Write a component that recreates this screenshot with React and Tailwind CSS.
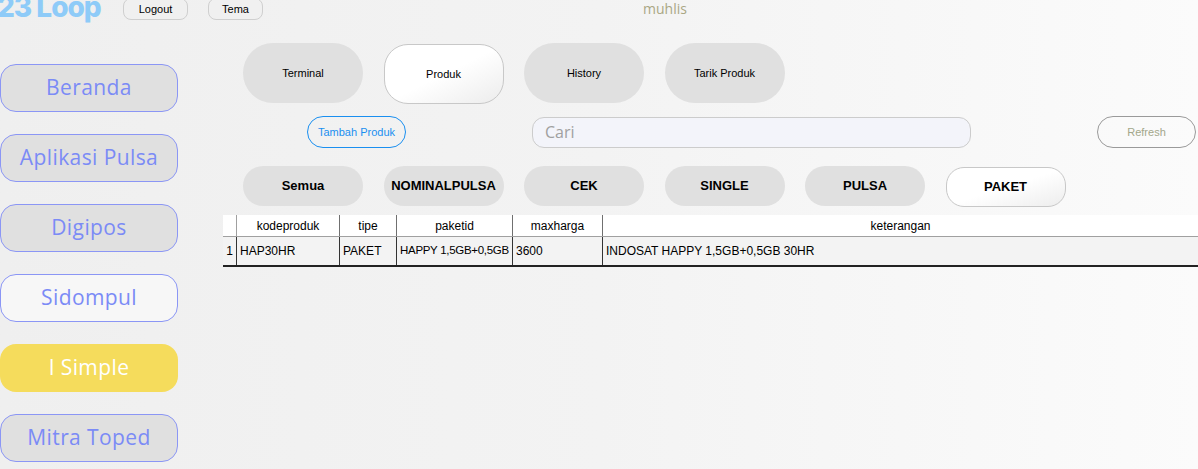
import React from "react";

const sideItems = [
  { label: "Beranda", style: "bg-[#e0e0e0] border border-[#8b96f5] text-[#7b8bf6]" },
  { label: "Aplikasi Pulsa", style: "bg-[#e0e0e0] border border-[#8b96f5] text-[#7b8bf6]" },
  { label: "Digipos", style: "bg-[#e0e0e0] border border-[#8b96f5] text-[#7b8bf6]" },
  { label: "Sidompul", style: "bg-[#f7f7f7] border border-[#8b96f5] text-[#7b8bf6]" },
  { label: "I Simple", style: "bg-[#f5dc5c] text-white" },
  { label: "Mitra Toped", style: "bg-[#e0e0e0] border border-[#8b96f5] text-[#7b8bf6]" },
];

const tabs = ["Terminal", "Produk", "History", "Tarik Produk"];
const filters = ["Semua", "NOMINALPULSA", "CEK", "SINGLE", "PULSA", "PAKET"];

const cols = [
  { key: "kodeproduk", w: "w-[103px]" },
  { key: "tipe", w: "w-[57px]" },
  { key: "paketid", w: "w-[116px]" },
  { key: "maxharga", w: "w-[90px]" },
  { key: "keterangan", w: "flex-1" },
];

const row = {
  kodeproduk: "HAP30HR",
  tipe: "PAKET",
  paketid: "HAPPY 1,5GB+0,5GB",
  maxharga: "3600",
  keterangan: "INDOSAT HAPPY 1,5GB+0,5GB 30HR",
};

export default function App() {
  const sans = { fontFamily: '"Liberation Sans", Arial, sans-serif' };
  const geo = { fontFamily: '"Open Sans", "Noto Sans", sans-serif' };

  return (
    <div className="w-[1198px] h-[469px] overflow-hidden bg-gradient-to-r from-[#efefef] via-[#f3f3f3] to-[#fbfbfb]">
      {/* header */}
      <div className="flex items-center h-[26px] -mt-[6px]" style={sans}>
        <div
          className="-ml-[3px] w-[126px] text-[28px] font-extrabold leading-none tracking-[-1px] text-[#8ecbf8] whitespace-nowrap"
          style={{ fontFamily: "Inter, sans-serif" }}
        >
          23 Loop
        </div>
        <button className="w-[65px] h-[22px] mt-[4px] rounded-[8px] border border-[#cfcfcf] bg-[#f0f0f0] text-[11px] text-black">
          Logout
        </button>
        <button className="ml-[20px] w-[55px] h-[22px] mt-[4px] rounded-[8px] border border-[#cfcfcf] bg-[#f0f0f0] text-[11px] text-black">
          Tema
        </button>
        <div className="ml-[380px] mt-[2px] text-[14px] text-[#aaa784]" style={geo}>
          muhlis
        </div>
      </div>

      <div className="flex">
        {/* sidebar */}
        <div className="w-[178px] pt-[44px] flex flex-col gap-[22px]" style={geo}>
          {sideItems.map((s) => (
            <div
              key={s.label}
              className={`h-[48px] rounded-[16px] flex items-center justify-center text-[21px] tracking-[0.4px] ${s.style}`}
            >
              {s.label}
            </div>
          ))}
        </div>

        {/* main */}
        <div className="ml-[45px] flex-1 pt-[23px]" style={sans}>
          <div className="flex gap-[20.5px] pl-[20px]">
            {tabs.map((t) => (
              <div
                key={t}
                className={`w-[120px] h-[60px] flex items-center justify-center text-[11px] text-black ${
                  t === "Produk"
                    ? "rounded-[24px] border border-[#c8c8c8] bg-gradient-to-br from-white via-white to-[#ececec] mt-[1px]"
                    : "rounded-[30px] bg-[#e0e0e0]"
                }`}
              >
                {t}
              </div>
            ))}
          </div>

          <div className="flex items-center mt-[12px] h-[32px]">
            <button className="ml-[84px] w-[99px] h-[32px] rounded-[16px] border border-[#1a8ff0] text-[11px] text-[#1a8ff0]">
              Tambah Produk
            </button>
            <div
              className="ml-[126px] w-[439px] h-[31px] rounded-[12px] border border-[#cccccc] bg-[#f3f4fa] flex items-center pl-[12px] text-[16px] text-[#a0a0a0]"
              style={geo}
            >
              Cari
            </div>
            <button className="ml-[126px] w-[99px] h-[32px] rounded-[16px] border border-[#9a9a9a] text-[11px] text-[#a3a78a]">
              Refresh
            </button>
          </div>

          <div className="flex gap-[20.5px] pl-[20px] mt-[18px]">
            {filters.map((f) => (
              <div
                key={f}
                className={`w-[120px] h-[40px] flex items-center justify-center text-[13px] font-bold text-black ${
                  f === "PAKET"
                    ? "rounded-[18px] border border-[#c8c8c8] bg-gradient-to-br from-white via-white to-[#ededed] mt-[1px]"
                    : "rounded-[20px] bg-[#e0e0e0]"
                }`}
              >
                {f}
              </div>
            ))}
          </div>

          {/* table */}
          <div className="mt-[8px] text-[12px] text-black whitespace-nowrap">
            <div className="flex h-[22px] bg-white border-b border-[#a0a0a0]">
              <div className="w-[14px] border-r border-[#a0a0a0]" />
              {cols.map((c) => (
                <div
                  key={c.key}
                  className={`${c.w} flex items-center justify-center ${c.key !== "keterangan" ? "border-r border-[#707070]" : ""}`}
                >
                  {c.key}
                </div>
              ))}
            </div>
            <div className="flex h-[30px] bg-[#f3f3f3] border-b-2 border-[#222]">
              <div className="w-[14px] flex items-center justify-center border-r border-[#333]">1</div>
              {cols.map((c) => (
                <div
                  key={c.key}
                  className={`${c.w} flex items-center pl-[3px] overflow-hidden ${c.key !== "keterangan" ? "border-r border-[#333]" : ""}`}
                >
                  <span className={c.key === "paketid" ? "text-[11.5px] tracking-[-0.3px]" : ""}>{row[c.key]}</span>
                </div>
              ))}
            </div>
          </div>
        </div>
      </div>
    </div>
  );
}
